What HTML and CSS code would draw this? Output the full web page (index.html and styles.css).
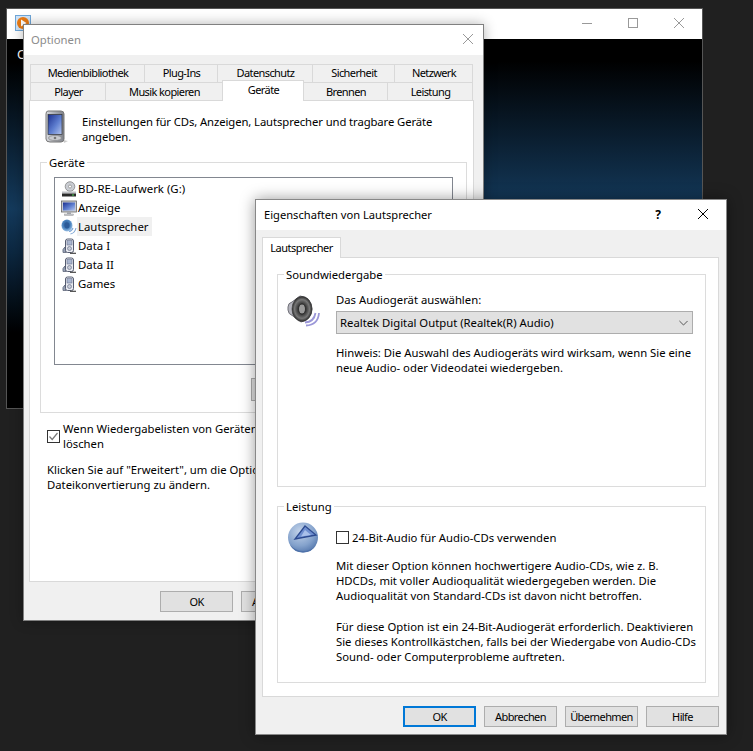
FILE: index.html
```html
<!DOCTYPE html>
<html lang="de">
<head>
<meta charset="utf-8">
<title>Optionen</title>
<link rel="stylesheet" href="styles.css">
</head>
<body>
<svg class="defs" width="0" height="0" aria-hidden="true">
  <defs>
    <linearGradient id="screen" x1="0" y1="0" x2="1" y2="1"><stop offset="0" stop-color="#1b2f8f"/><stop offset=".55" stop-color="#5f7fd0"/><stop offset="1" stop-color="#b5c6ee"/></linearGradient>
    <linearGradient id="metal" x1="0" y1="0" x2="1" y2="0"><stop offset="0" stop-color="#d8dade"/><stop offset=".5" stop-color="#a8abb2"/><stop offset="1" stop-color="#7d8088"/></linearGradient>
    <radialGradient id="cone" cx=".5" cy=".5" r=".5"><stop offset="0" stop-color="#6c6c6c"/><stop offset=".35" stop-color="#2c2c2c"/><stop offset=".75" stop-color="#777"/><stop offset="1" stop-color="#2d2d2d"/></radialGradient>
    <radialGradient id="pie" cx=".4" cy=".3" r=".8"><stop offset="0" stop-color="#c4d4ea"/><stop offset=".6" stop-color="#84a2cc"/><stop offset="1" stop-color="#4a6ea6"/></radialGradient>
    <radialGradient id="blueball" cx=".45" cy=".4" r=".6"><stop offset="0" stop-color="#1f4f8c"/><stop offset=".6" stop-color="#4a84c0"/><stop offset="1" stop-color="#9cc0e4"/></radialGradient>
    <symbol id="player" viewBox="0 0 16 16">
      <path d="M2 14.5 Q1 11 4 9 L5 14.5 Z" fill="#9aa4b8" stroke="#555c70" stroke-width=".7"/>
      <rect x="4.5" y="1" width="8" height="13.5" rx="2" fill="#e8eaf0" stroke="#555c70"/>
      <rect x="6" y="2.6" width="5" height="4.4" fill="#aab6cf" stroke="#6d7690" stroke-width=".6"/>
      <circle cx="8.5" cy="10.5" r="2" fill="#c8ccd6" stroke="#6d7690" stroke-width=".7"/>
      <path d="M9 15.3 H15" stroke="#444" stroke-width="1.2"/>
    </symbol>
  </defs>
</svg>

<section class="window back-window">
  <header class="back-title">
    <svg class="app-icon" width="16" height="16" viewBox="0 0 16 16"><rect x=".5" y=".5" width="15" height="15" fill="#cfe3f7" stroke="#6ea6d8"/><circle cx="8" cy="8" r="6" fill="#ea7a12"/><path d="M6 4.5 L11.5 8 L6 11.5 Z" fill="#fff"/></svg>
    <div class="caption-buttons">
      <svg width="12" height="12" viewBox="0 0 12 12"><path d="M1 6.5 H11" stroke="#999"/></svg>
      <svg width="12" height="12" viewBox="0 0 12 12"><rect x="1.5" y="1.5" width="9" height="9" fill="none" stroke="#999"/></svg>
      <svg width="12" height="12" viewBox="0 0 12 12"><path d="M1 1 L11 11 M11 1 L1 11" stroke="#999"/></svg>
    </div>
  </header>
  <div class="back-body">O</div>
</section>

<section class="window options-window">
  <header class="title-bar options-title">
    <span>Optionen</span>
    <svg width="12" height="12" viewBox="0 0 12 12"><path d="M1 1 L11 11 M11 1 L1 11" stroke="#999"/></svg>
  </header>
  <div class="options-body">
    <div class="tab-row tab-row-top">
      <span class="tab">Medienbibliothek</span><span class="tab">Plug-Ins</span><span class="tab">Datenschutz</span><span class="tab">Sicherheit</span><span class="tab">Netzwerk</span>
    </div>
    <div class="tab-row tab-row-bottom">
      <span class="tab">Player</span><span class="tab">Musik kopieren</span><span class="tab tab-active">Geräte</span><span class="tab">Brennen</span><span class="tab">Leistung</span>
    </div>
    <div class="pane options-pane">
      <div class="intro">
        <svg class="pda" width="24" height="34" viewBox="0 0 24 34">
          <path d="M4 1 H17 Q20 1 20 4 V29 Q20 32 17 32 H6 Q2 32 2 29 V4 Q2 1 4 1Z" fill="url(#metal)" stroke="#777"/>
          <rect x="4" y="4.500" width="14" height="20" fill="url(#screen)" stroke="#333" stroke-width=".7"/>
          <ellipse cx="11" cy="28" rx="6.500" ry="2.500" fill="#c9cbd0" stroke="#808080" stroke-width=".6"/>
          <circle cx="11" cy="28" r="1.300" fill="#777"/>
          <path d="M20 30 Q23 31 24 31 L20 33Z" fill="#ccc"/>
        </svg>
        <p>Einstellungen für CDs, Anzeigen, Lautsprecher und tragbare Geräte<br>angeben.</p>
      </div>
      <fieldset class="group devices-group">
        <legend>Geräte</legend>
        <ul class="device-list">
          <li>
            <svg width="16" height="16" viewBox="0 0 16 16"><circle cx="9" cy="5.500" r="4.800" fill="#c9ccd2" stroke="#777" stroke-width=".7"/><circle cx="9" cy="5.500" r="1.500" fill="#fff" stroke="#777" stroke-width=".6"/><path d="M1 10.500 H15 V12.500 H1Z" fill="#bfc1c5"/><path d="M1 12.500 H15 V15.500 H1Z" fill="#2b2b2b"/><rect x="11" y="13.500" width="2" height="1" fill="#49d34f"/></svg>
            <span>BD-RE-Laufwerk (G:)</span>
          </li>
          <li>
            <svg width="16" height="16" viewBox="0 0 16 16"><rect x=".5" y="1" width="15" height="11" fill="#c8cbd1" stroke="#666" stroke-width=".8"/><rect x="2" y="2.500" width="12" height="8" fill="url(#screen)"/><rect x="6" y="12" width="4" height="2" fill="#a8abb2"/><rect x="3.500" y="14" width="9" height="1.500" fill="#c8cbd1" stroke="#888" stroke-width=".4"/></svg>
            <span>Anzeige</span>
          </li>
          <li>
            <svg width="16" height="16" viewBox="0 0 16 16"><ellipse cx="6" cy="6.500" rx="5.500" ry="6" fill="url(#blueball)"/><ellipse cx="6" cy="6.500" rx="2.500" ry="3" fill="#2a5a98"/><path d="M8 12.500 Q11 12 12 9 M9.500 15 Q14 14 15 9" fill="none" stroke="#7ea6d4" stroke-width="1.100"/></svg>
            <span class="selected">Lautsprecher</span>
          </li>
          <li><svg width="16" height="16"><use href="#player"/></svg><span>Data I</span></li>
          <li><svg width="16" height="16"><use href="#player"/></svg><span>Data II</span></li>
          <li><svg width="16" height="16"><use href="#player"/></svg><span>Games</span></li>
        </ul>
        <div class="list-actions"><button class="btn" type="button" aria-label="Aktion"></button></div>
      </fieldset>
      <label class="check-row">
        <span class="checkbox checked"><svg width="11" height="11" viewBox="0 0 11 11"><path d="M1.500 5.500 L4.200 8.500 L9.500 2" fill="none" stroke="#777" stroke-width="1.200"/></svg></span>
        <span>Wenn Wiedergabelisten von Geräten entfernt<br>löschen</span>
      </label>
      <p class="advanced-note">Klicken Sie auf "Erweitert", um die Optionen für die<br>Dateikonvertierung zu ändern.</p>
    </div>
    <div class="footer options-footer">
      <button class="btn" type="button">OK</button>
      <button class="btn" type="button">Abbrechen</button>
    </div>
  </div>
</section>

<section class="window speaker-dialog">
  <header class="title-bar dialog-title">
    <span class="dialog-name">Eigenschaften von Lautsprecher</span>
    <span class="help">?</span>
    <svg width="12" height="12" viewBox="0 0 12 12"><path d="M1 1 L11 11 M11 1 L1 11" stroke="#000"/></svg>
  </header>
  <div class="dialog-body">
    <div class="dialog-tabs"><span class="tab tab-active dialog-tab">Lautsprecher</span></div>
    <div class="pane dialog-pane">
      <fieldset class="group sound-group">
        <legend>Soundwiedergabe</legend>
        <div class="group-row">
          <svg class="big-icon speaker-icon" width="33" height="33" viewBox="0 0 33 33">
            <path d="M1 13 Q1 9 5 8 L13 2 Q24 3 25 15 Q24 26 14 28 L6 22 Q1 20 1 16Z" fill="#b4b4bc" stroke="#707078"/>
            <ellipse cx="15" cy="15" rx="10" ry="12.500" fill="url(#cone)" stroke="#333" stroke-width=".6"/>
            <ellipse cx="15" cy="15" rx="3.500" ry="5" fill="#9a9a9a" stroke="#222" stroke-width=".8"/>
            <path d="M18 28.500 Q27 28 28.500 19 M19 31.500 Q31 31 32 19" fill="none" stroke="#9b97d8" stroke-width="1.800"/>
          </svg>
          <div class="group-content">
            <div class="field-label">Das Audiogerät auswählen:</div>
            <div class="select">
              <span>Realtek Digital Output (Realtek(R) Audio)</span>
              <svg width="9" height="6" viewBox="0 0 11 7"><path d="M.5 1 L5.500 6 L10.500 1" fill="none" stroke="#555" stroke-width="1.200"/></svg>
            </div>
            <p class="hint">Hinweis: Die Auswahl des Audiogeräts wird wirksam, wenn Sie eine<br>neue Audio- oder Videodatei wiedergeben.</p>
          </div>
        </div>
      </fieldset>
      <fieldset class="group perf-group">
        <legend>Leistung</legend>
        <div class="group-row">
          <svg class="big-icon pie-icon" width="31" height="31" viewBox="0 0 31 31">
            <circle cx="15" cy="15.500" r="15" fill="url(#pie)"/>
            <path d="M2 23 Q8 29 15 29 Q23 29 28 23 Q24 30.500 15 30.500 Q6 30.500 2 23Z" fill="#4f72aa"/>
            <path d="M17 4 L28 13 L7 17 Z" fill="#6f8fd0" stroke="#2c4a90" stroke-width="1.300"/>
            <path d="M17 8 L23 13 L13 14.500 Z" fill="#a9c0ea"/>
          </svg>
          <div class="group-content">
            <label class="check-row perf-check"><span class="checkbox"></span><span>24-Bit-Audio für Audio-CDs verwenden</span></label>
            <p class="perf-text">Mit dieser Option können hochwertigere Audio-CDs, wie z. B.<br>HDCDs, mit voller Audioqualität wiedergegeben werden. Die<br>Audioqualität von Standard-CDs ist davon nicht betroffen.</p>
            <p class="perf-text perf-text-last">Für diese Option ist ein 24-Bit-Audiogerät erforderlich. Deaktivieren<br>Sie dieses Kontrollkästchen, falls bei der Wiedergabe von Audio-CDs<br>Sound- oder Computerprobleme auftreten.</p>
          </div>
        </div>
      </fieldset>
    </div>
    <div class="footer dialog-footer">
      <button class="btn btn-default" type="button">OK</button>
      <button class="btn" type="button">Abbrechen</button>
      <button class="btn" type="button">Übernehmen</button>
      <button class="btn" type="button">Hilfe</button>
    </div>
  </div>
</section>
</body>
</html>
```
FILE: styles.css
```css
* { box-sizing: border-box; }
html, body { margin: 0; height: 100%; }
body {
  position: relative;
  width: 753px;
  height: 751px;
  overflow: hidden;
  background: #202020;
  color: #000;
  font-family: "Noto Sans", "Liberation Sans", sans-serif;
  font-size: 11.3px;
  line-height: 15px;
}
p { margin: 0; white-space: nowrap; }
.defs { position: absolute; }

.window { position: absolute; display: flex; flex-direction: column; }
.back-window { left: 6px; top: 8px; width: 697px; height: 401px; border: 1px solid #555; background: #fff; }
.options-window { left: 23px; top: 24px; width: 461px; height: 597px; border: 1px solid #808080; background: #f0f0f0; box-shadow: 0 0 12px rgba(0,0,0,.3); }
.speaker-dialog { left: 255px; top: 199px; width: 472px; height: 536px; border: 1px solid #888; background: #f0f0f0; box-shadow: 0 0 14px rgba(0,0,0,.4); }

.back-title { height: 30px; display: flex; align-items: center; padding: 0 17px 0 8px; justify-content: space-between; background: #fff; }
.app-icon { margin-top: -2px; }
.caption-buttons { display: flex; gap: 34px; margin-top: -2px; }
.back-body { flex: 1; padding: 8px 10px; color: #fff; font-size: 13px; background: linear-gradient(#000 0, #000 6%, #143a5c 46%, #0c2740 58%, #000 80%, #000 100%); }

.title-bar { display: flex; align-items: center; background: #fff; flex: none; }
.options-title { height: 30px; padding: 0 9px 2px 7px; justify-content: space-between; color: #8c8c8c; }
.dialog-title { height: 30px; padding: 0 17px 2px 8px; }
.dialog-name { flex: 1; font-size: 11.15px; }
.help { margin-right: 36px; font-weight: 700; font-size: 12px; }

.options-body { flex: 1; padding: 9px 9px 0 5px; display: flex; flex-direction: column; }
.tab-row { display: grid; height: 18px; margin-left: 2px; margin-right: 1px; }
.tab-row-top { grid-template-columns: 114px 73px 95px 82px 78px; }
.tab-row-bottom { grid-template-columns: 75px 117px 81px 84px 85px; }
.tab { display: flex; align-items: center; justify-content: center; border: 1px solid #d9d9d9; border-bottom: 0; margin-left: -1px; background: #f0f0f0; padding: 0 0 1px 1px; font-size: 11px; letter-spacing: -.6px; }
.tab-row-top .tab { padding-bottom: 2px; }
.tab-active { position: relative; z-index: 1; height: 21px; margin-top: -2px; background: #fff; padding-bottom: 4px; }

.pane { background: #fff; border: 1px solid #d9d9d9; }
.options-pane { height: 482px; padding: 0 6px 0 10px; }
.intro { display: flex; gap: 16px; padding: 9px 0 0 4px; height: 54px; letter-spacing: -.1px; }
.pda { flex: none; margin-top: 0; }
.intro p { padding-top: 4px; margin-left: -2px; }

.group { margin: 0; border: 1px solid #dcdcdc; padding: 0; min-width: 0; }
.group legend { padding: 0 2px; margin-left: 6px; line-height: 15px; }
.devices-group { height: 258px; padding: 7px 13px 0 13px; }
.devices-group legend { margin-left: -7px; }
.device-list { list-style: none; margin: 0; padding: 1px 0 0 6px; height: 188px; border: 1px solid #828790; background: #fff; font-size: 11.4px; }
.device-list li { display: flex; align-items: center; height: 19px; gap: 0; }
.device-list svg { flex: none; }
.device-list span { padding: 0 1px; }
.selected { background: #f0f0f0; align-self: stretch; line-height: 19px; width: 75px; }
.list-actions { padding: 13px 0 0 197px; }

.btn { display: block; width: 73px; height: 21px; padding: 0; background: #e1e1e1; border: 1px solid #adadad; font: inherit; font-size: 11px; letter-spacing: -.6px; color: #000; }
.btn-default { border: 2px solid #0078d7; }
.list-actions .btn { height: 23px; }

.check-row { display: flex; gap: 3px; }
.checkbox { flex: none; width: 13px; height: 13px; border: 1px solid #333; background: #fff; display: flex; align-items: center; justify-content: center; }
.options-pane .check-row { margin: 8px 0 0 7px; align-items: center; }
.advanced-note { margin: 11px 0 0 7px; }

.footer { display: flex; gap: 8px; flex: none; }
.options-footer { padding: 9px 0 0 131px; }
.dialog-footer { padding: 9px 0 0 141px; }

.dialog-body { flex: 1; padding: 7px 7px 0 6px; display: flex; flex-direction: column; }
.dialog-tabs { display: flex; height: 20px; margin-left: 1px; }
.dialog-tab { width: 79px; height: 21px; margin-top: 0; padding: 0 0 1px; letter-spacing: -.45px; }
.dialog-pane { height: 440px; padding: 9px 12px 0 14px; }
.sound-group { height: 220px; }
.perf-group { height: 184px; margin-top: 12px; }
.group-row { display: flex; }
.big-icon { flex: none; }
.sound-group .group-row { padding: 11px 0 0 9px; gap: 16px; }
.speaker-icon { margin-top: 1px; }
.perf-group .group-row { padding: 8px 0 0 10px; gap: 17px; }
.group-content { min-width: 0; width: 357px; }
.field-label { height: 15px; margin-top: -1px; }
.select { display: flex; align-items: center; justify-content: space-between; height: 23px; margin-top: 4px; padding: 0 4px 0 3px; border: 1px solid #adadad; background: #e1e1e1; }
.hint { margin-top: 11px; }
.perf-check { margin-top: 9px; align-items: center; height: 13px; }
.perf-text { margin-top: 14px; }
.perf-text-last { margin-top: 16px; }
```
